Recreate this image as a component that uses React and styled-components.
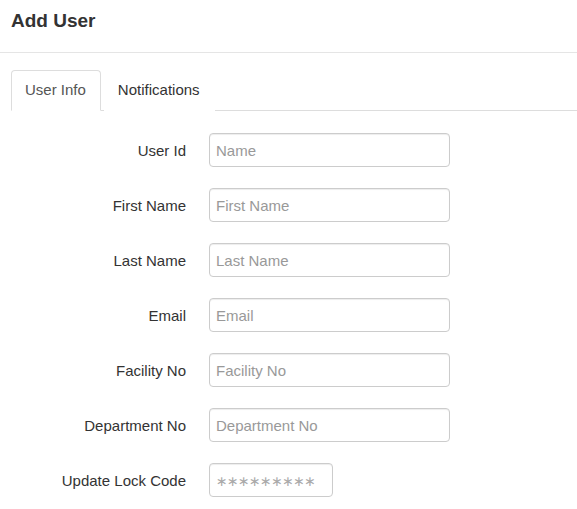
import styled, { createGlobalStyle } from 'styled-components'

const fields = [
    { label: 'User Id', placeholder: 'Name' },
    { label: 'First Name', placeholder: 'First Name' },
    { label: 'Last Name', placeholder: 'Last Name' },
    { label: 'Email', placeholder: 'Email' },
    { label: 'Facility No', placeholder: 'Facility No' },
    { label: 'Department No', placeholder: 'Department No' },
]

export default function App() {

    return (
        <>
            <GlobalStyle />
            <Modal>
                <Header>
                    <Title>Add User</Title>
                </Header>
                <Body>
                    <Tabs>
                        <Tab $active>User Info</Tab>
                        <Tab>Notifications</Tab>
                    </Tabs>
                    <Form>
                        {fields.map((f) => (
                            <Row key={f.label}>
                                <Label>{f.label}</Label>
                                <Input placeholder={f.placeholder} />
                            </Row>
                        ))}
                        <Row>
                            <Label>Update Lock Code</Label>
                            <Input $short $stars placeholder="∗∗∗∗∗∗∗∗∗" />
                        </Row>
                    </Form>
                </Body>
            </Modal>
        </>
    )
}

const GlobalStyle = createGlobalStyle`
    body {
        margin: 0;
        background: #fff;
        font-family: "Liberation Sans", Arial, sans-serif;
        color: #333;
    }
`
const Modal = styled.div`
    width: 577px;
    display: flex;
    flex-direction: column;
`
const Header = styled.div`
    padding: 8px 11px 18px;
    border-bottom: 1px solid #e5e5e5;
`
const Title = styled.h4`
    margin: 0;
    font-size: 19px;
    line-height: 26px;
    font-weight: 700;
    color: #333;
`
const Body = styled.div`
    padding: 17px 0 0 11px;
`
const Tabs = styled.div`
    display: flex;
    gap: 3px;
    border-bottom: 1px solid #ddd;
`
const Tab = styled.div`
    padding: 9px 14px 10px 13px;
    margin-bottom: -1px;
    font-size: 15px;
    line-height: 20px;
    border: 1px solid ${(p) => (p.$active ? '#ddd' : 'transparent')};
    border-bottom-color: ${(p) => (p.$active ? '#fff' : 'transparent')};
    border-radius: 4px 4px 0 0;
    background: #fff;
    color: ${(p) => (p.$active ? '#555' : '#333')};
`
const Form = styled.div`
    display: flex;
    flex-direction: column;
    gap: 21px;
    padding-top: 22px;
`
const Row = styled.div`
    display: grid;
    grid-template-columns: 175px auto;
    column-gap: 23px;
    align-items: center;
`
const Label = styled.label`
    text-align: right;
    font-size: 15px;
    color: #333;
`
const Input = styled.input`
    box-sizing: border-box;
    width: ${(p) => (p.$short ? '124px' : '241px')};
    height: 34px;
    padding: 6px;
    font-family: "Liberation Sans", Arial, sans-serif;
    font-size: 15px;
    color: #555;
    border: 1px solid #ccc;
    border-radius: 4px;
    box-shadow: inset 0 1px 1px rgba(0, 0, 0, 0.075);
    outline: none;
    letter-spacing: ${(p) => (p.$stars ? '-0.7px' : 'normal')};

    &::placeholder {
        color: ${(p) => (p.$stars ? '#aaa' : '#999')};
        opacity: 1;
        font-family: ${(p) => (p.$stars ? '"DejaVu Sans", sans-serif' : 'inherit')};
        font-size: ${(p) => (p.$stars ? '14px' : 'inherit')};
    }
`
